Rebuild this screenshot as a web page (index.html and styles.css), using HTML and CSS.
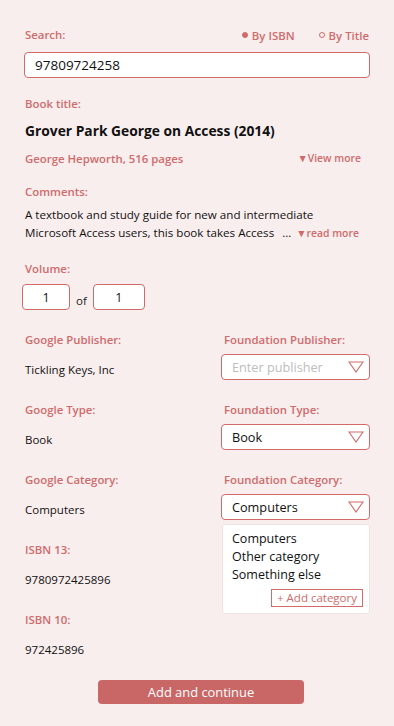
FILE: index.html
```html
<!DOCTYPE html>
<html lang="en">
<head>
<meta charset="utf-8">
<title>Add book</title>
<link rel="stylesheet" href="styles.css">
</head>
<body>
<main class="page">
  <div class="search-head">
    <span class="label">Search:</span>
    <div class="modes">
      <span class="mode"><span class="dot dot-on"></span>By ISBN</span>
      <span class="mode"><span class="dot"></span>By Title</span>
    </div>
  </div>
  <div class="field search-field">97809724258</div>

  <div class="label book-label">Book title:</div>
  <div class="title">Grover Park George on Access (2014)</div>
  <div class="author-row">
    <span class="author">George Hepworth, 516 pages</span>
    <span class="more">▼View more</span>
  </div>

  <div class="label comments-label">Comments:</div>
  <p class="comments">A textbook and study guide for new and intermediate<br>Microsoft Access users, this book takes Access<span class="ellipsis">…</span><span class="read-more">▼read more</span></p>

  <div class="label volume-label">Volume:</div>
  <div class="volume">
    <div class="field vol-box">1</div>
    <span class="of">of</span>
    <div class="field vol-box vol-box-2">1</div>
  </div>

  <div class="pairs">
    <div class="pair">
      <div class="label">Google Publisher:</div>
      <div class="value">Tickling Keys, Inc</div>
    </div>
    <div class="pair">
      <div class="label">Foundation Publisher:</div>
      <div class="field select placeholder">Enter publisher<svg class="caret" viewBox="0 0 16 12" width="16" height="12"><path d="M1 1 L15 1 L8 11 Z" fill="none" stroke="#d26a6a" stroke-width="1.1"/></svg></div>
    </div>

    <div class="pair">
      <div class="label">Google Type:</div>
      <div class="value">Book</div>
    </div>
    <div class="pair">
      <div class="label">Foundation Type:</div>
      <div class="field select">Book<svg class="caret" viewBox="0 0 16 12" width="16" height="12"><path d="M1 1 L15 1 L8 11 Z" fill="none" stroke="#d26a6a" stroke-width="1.1"/></svg></div>
    </div>

    <div class="pair">
      <div class="label">Google Category:</div>
      <div class="value">Computers</div>
    </div>
    <div class="pair">
      <div class="label">Foundation Category:</div>
      <div class="select-wrap">
        <div class="field select">Computers<svg class="caret" viewBox="0 0 16 12" width="16" height="12"><path d="M1 1 L15 1 L8 11 Z" fill="none" stroke="#d26a6a" stroke-width="1.1"/></svg></div>
        <div class="menu">
          <div class="menu-item">Computers</div>
          <div class="menu-item">Other category</div>
          <div class="menu-item">Something else</div>
          <div class="menu-actions"><span class="add-cat">+ Add category</span></div>
        </div>
      </div>
    </div>

    <div class="pair">
      <div class="label">ISBN 13:</div>
      <div class="value">9780972425896</div>
    </div>
    <div class="pair"></div>

    <div class="pair">
      <div class="label">ISBN 10:</div>
      <div class="value">972425896</div>
    </div>
    <div class="pair"></div>
  </div>

  <div class="actions">
    <button class="primary" type="button">Add and continue</button>
  </div>
</main>
</body>
</html>
```

FILE: styles.css
```css
* { box-sizing: border-box; }

html, body {
  margin: 0;
  padding: 0;
  background: #f9eeee;
}

body {
  font-family: "Open Sans", "Noto Sans", Arial, sans-serif;
  color: #111;
  font-size: 12px;
}

.page {
  padding: 27px 24px 20px 25px;
  width: 394px;
}

.label {
  color: #d06b6b;
  font-weight: 600;
  font-size: 11.4px;
  line-height: 16px;
  height: 16px;
}

.search-head {
  display: flex;
  justify-content: space-between;
  align-items: center;
  height: 16px;
}

.modes {
  display: flex;
  gap: 24px;
  padding-right: 1px;
}

.mode {
  color: #d06b6b;
  font-weight: 600;
  font-size: 11.4px;
  display: inline-flex;
  align-items: center;
  gap: 4px;
}

.dot {
  width: 6px;
  height: 6px;
  border-radius: 50%;
  border: 1px solid #d06b6b;
  display: inline-block;
}

.dot-on { background: #d06b6b; }

.field {
  background: #fff;
  border: 1px solid #d26a6a;
  border-radius: 4px;
  height: 26px;
  display: flex;
  align-items: center;
  font-size: 13.5px;
  color: #111;
}

.search-field {
  margin-top: 9px;
  margin-left: -1px;
  padding-left: 10px;
  width: 346px;
}

.book-label { margin-top: 18px; }

.title {
  margin-top: 9px;
  font-weight: 700;
  font-size: 13.8px;
  line-height: 20px;
  height: 20px;
}

.author-row {
  margin-top: 9px;
  display: flex;
  justify-content: space-between;
  align-items: center;
  height: 16px;
  padding-right: 9px;
}

.author {
  color: #d06b6b;
  font-weight: 600;
  font-size: 11.4px;
}

.more, .read-more {
  color: #d06b6b;
  font-size: 10.4px;
  font-weight: 600;
}

.comments-label { margin-top: 18px; }

.comments {
  margin: 6px 0 0;
  font-size: 11.6px;
  line-height: 18px;
}

.ellipsis {
  margin-left: 8px;
  margin-right: 5px;
}

.volume-label { margin-top: 19px; }

.volume {
  margin-top: 7px;
  margin-left: -3px;
  display: flex;
  align-items: flex-end;
  gap: 6px;
}

.vol-box {
  width: 48px;
  justify-content: center;
  font-size: 12.5px;
}

.vol-box-2 {
  width: 52px;
  margin-left: 0;
}

.of {
  font-size: 11.5px;
  line-height: 18px;
  color: #222;
}

.pairs {
  margin-top: 22px;
  display: grid;
  grid-template-columns: 196px 149px;
  grid-auto-rows: 70px;
}

.pair {
  display: flex;
  flex-direction: column;
  gap: 6px;
}

.pairs .pair:nth-child(even) .label { margin-left: 3px; }

.value {
  height: 26px;
  display: flex;
  align-items: center;
  padding-top: 5px;
  font-size: 11.5px;
}

.select {
  padding: 0 5px 0 10px;
  justify-content: space-between;
  font-size: 12.7px;
}

.placeholder { color: #bdbdbd; }

.caret { display: block; }

.select-wrap { position: relative; }

.menu {
  position: absolute;
  top: 30px;
  left: 1px;
  width: 148px;
  background: #fff;
  border: 1px solid #efe4e4;
  border-radius: 3px;
  padding: 5px 6px 6px 9px;
  font-size: 12.5px;
  line-height: 18px;
  z-index: 2;
}

.menu-actions {
  display: flex;
  justify-content: flex-end;
  margin-top: 5px;
}

.add-cat {
  border: 1px solid #d26a6a;
  color: #d26a6a;
  font-size: 11.5px;
  line-height: 16px;
  padding: 0 5px;
}

.actions {
  display: flex;
  justify-content: center;
  margin-top: -2px;
  padding-left: 7px;
}

.primary {
  width: 206px;
  height: 24px;
  background: #c96767;
  border: none;
  border-radius: 4px;
  color: #fff;
  font-family: inherit;
  font-size: 12.9px;
  padding: 0;
}
```
